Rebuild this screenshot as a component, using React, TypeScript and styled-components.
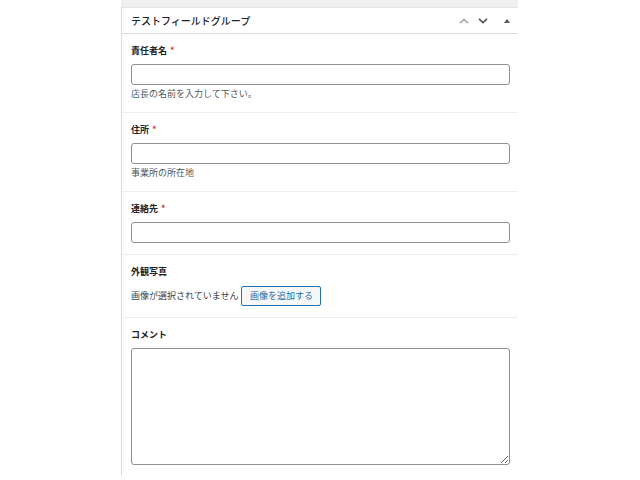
import styled, { createGlobalStyle } from 'styled-components';

const GlobalStyle = createGlobalStyle`
  html, body {
    margin: 0;
    padding: 0;
    background: #ffffff;
  }
  body {
    font-family: "Noto Sans CJK JP", "Noto Sans", sans-serif;
    color: #1d2327;
  }
`;

type Field = {
  label: string;
  required?: boolean;
  kind: 'text' | 'image' | 'textarea';
  description?: string;
};

const fields: Field[] = [
  { label: '責任者名', required: true, kind: 'text', description: '店長の名前を入力して下さい。' },
  { label: '住所', required: true, kind: 'text', description: '事業所の所在地' },
  { label: '連絡先', required: true, kind: 'text' },
  { label: '外観写真', kind: 'image' },
  { label: 'コメント', kind: 'textarea' },
];

export default function App() {
  return (
    <>
      <GlobalStyle />
      <Page>
        <TopStrip />
        <Postbox>
          <Header>
            <Title>テストフィールドグループ</Title>
            <Handles>
              <HandleButton tone="light" aria-label="上へ移動">
                <svg width="10" height="6" viewBox="0 0 10 6">
                  <path d="M1 5.2 L5 1.4 L9 5.2" fill="none" stroke="currentColor" strokeWidth="1.6" />
                </svg>
              </HandleButton>
              <HandleButton tone="dark" aria-label="下へ移動">
                <svg width="10" height="6" viewBox="0 0 10 6">
                  <path d="M1 0.8 L5 4.6 L9 0.8" fill="none" stroke="currentColor" strokeWidth="1.6" />
                </svg>
              </HandleButton>
              <HandleButton tone="dark" aria-label="パネルを切り替え">
                <svg width="6" height="4" viewBox="0 0 6 4">
                  <path d="M0 4 L3 0 L6 4 Z" fill="currentColor" />
                </svg>
              </HandleButton>
            </Handles>
          </Header>
          <Fields>
            {fields.map((f) => (
              <FieldRow key={f.label}>
                <Label>
                  {f.label}
                  {f.required && <Required>*</Required>}
                </Label>
                {f.kind === 'text' && <TextInput type="text" />}
                {f.kind === 'image' && (
                  <ImageRow>
                    <span>画像が選択されていません</span>
                    <AddButton type="button">画像を追加する</AddButton>
                  </ImageRow>
                )}
                {f.kind === 'textarea' && <TextArea />}
                {f.description && <Description>{f.description}</Description>}
              </FieldRow>
            ))}
          </Fields>
        </Postbox>
      </Page>
    </>
  );
}

const Page = styled.div`
  width: 397px;
  margin-left: 121px;
  display: flex;
  flex-direction: column;
`;

const TopStrip = styled.div`
  height: 7px;
  background: #f0f0f1;
`;

const Postbox = styled.div`
  border-left: 1px solid #dcdcde;
  border-top: 1px solid #e4e4e6;
  background: #ffffff;
`;

const Header = styled.div`
  height: 25px;
  display: flex;
  align-items: center;
  justify-content: space-between;
  padding: 0 6px 0 9px;
  border-bottom: 1px solid #dcdcde;
`;

const Title = styled.h2`
  margin: 0;
  font-size: 10px;
  font-weight: 500;
  line-height: 14px;
  color: #1d2327;
`;

const Handles = styled.div`
  display: flex;
  align-items: center;
  gap: 8px;
`;

const HandleButton = styled.span<{ tone: 'light' | 'dark' }>`
  display: flex;
  align-items: center;
  justify-content: center;
  width: 10px;
  height: 10px;
  color: ${(p) => (p.tone === 'light' ? '#a7aaad' : '#50575e')};
  &:nth-child(2) {
    margin-left: 1px;
  }
  &:last-child {
    margin-left: 6px;
  }
`;

const Fields = styled.div`
  display: flex;
  flex-direction: column;
`;

const FieldRow = styled.div`
  padding: 10px 8px 11px 9px;
  border-top: 1px solid #eeeeee;
  &:first-child {
    border-top: none;
  }
`;

const Label = styled.div`
  font-size: 9px;
  font-weight: 700;
  line-height: 14px;
  color: #1d2327;
  margin-bottom: 6px;
`;

const Required = styled.span`
  color: #d63638;
  margin-left: 3px;
`;

const TextInput = styled.input`
  display: block;
  box-sizing: border-box;
  width: 100%;
  height: 21px;
  margin: 0;
  border: 1px solid #8c8f94;
  border-radius: 3px;
  background: #ffffff;
  font-family: inherit;
  outline: none;
`;

const TextArea = styled.textarea`
  display: block;
  box-sizing: border-box;
  width: 100%;
  height: 117px;
  margin: 1px 0 0;
  border: 1px solid #8c8f94;
  border-radius: 3px;
  background: #ffffff;
  font-family: inherit;
  outline: none;
`;

const Description = styled.p`
  margin: 2px 0 0;
  font-size: 9px;
  line-height: 14px;
  color: #50575e;
`;

const ImageRow = styled.div`
  display: flex;
  align-items: center;
  gap: 3px;
  min-height: 21px;
  font-size: 9px;
  line-height: 14px;
  color: #3c434a;
  white-space: nowrap;
`;

const AddButton = styled.button`
  box-sizing: border-box;
  width: 80px;
  height: 20px;
  padding: 0 4px;
  border: 1px solid #2271b1;
  border-radius: 2px;
  background: #f6f7f7;
  color: #2271b1;
  font-family: inherit;
  font-size: 9px;
  line-height: 18px;
  white-space: nowrap;
  cursor: pointer;
`;
